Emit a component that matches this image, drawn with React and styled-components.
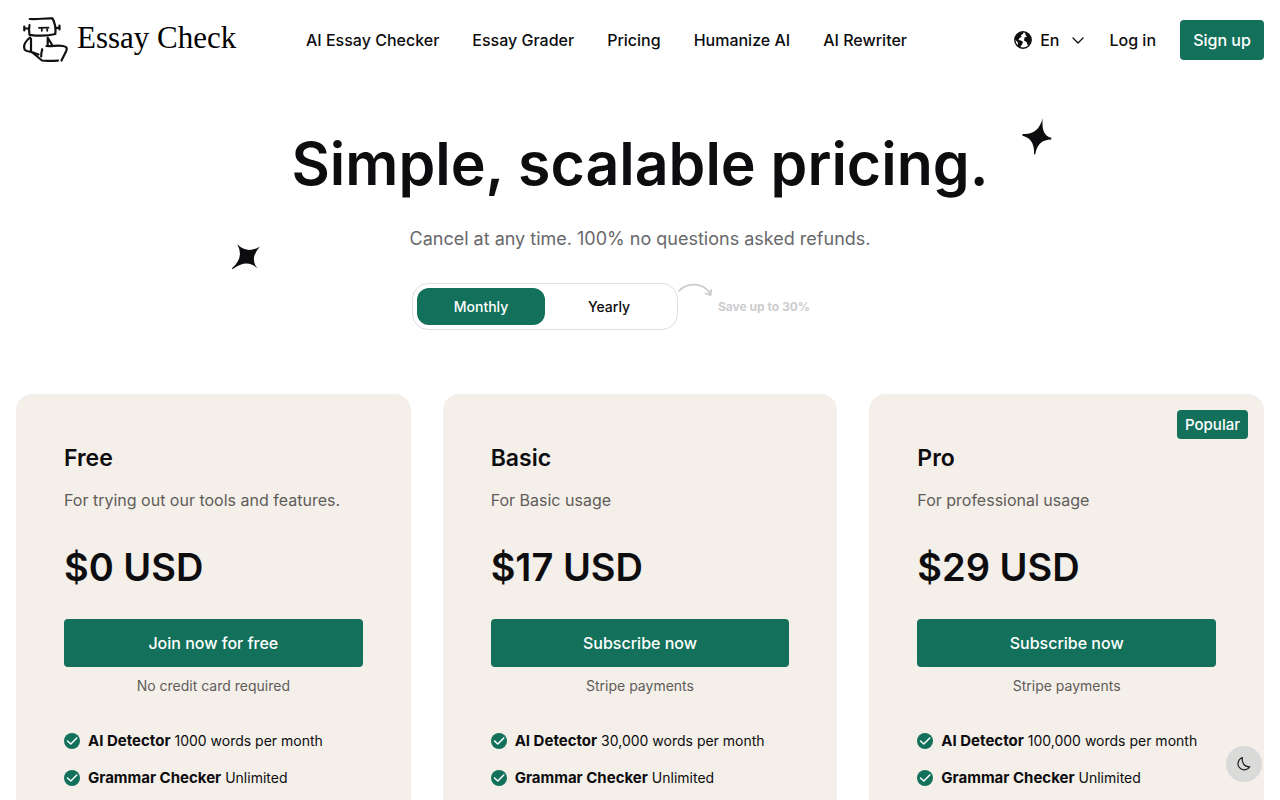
import React, { useState } from "react";
import styled, { createGlobalStyle } from "styled-components";

const green = "#13715b";
const ink = "#0d0d0f";

const GlobalStyle = createGlobalStyle`
  *, *::before, *::after { box-sizing: border-box; }
  body {
    margin: 0;
    background: #fff;
    color: ${ink};
    font-family: Inter, "Liberation Sans", sans-serif;
    font-size: 16px;
    line-height: 24px;
  }
  h1, h2, p, ul { margin: 0; padding: 0; }
  a { color: inherit; text-decoration: none; }
  button { font: inherit; border: 0; cursor: pointer; }
`;

const Page = styled.div`
  display: flex;
  flex-direction: column;
  min-height: 100vh;
`;

const Header = styled.header`
  display: flex;
  align-items: center;
  height: 80px;
  padding: 0 16px;
  font-weight: 500;
  white-space: nowrap;
`;

const Logo = styled.a`
  display: flex;
  align-items: center;
  gap: 7px;
  flex: 0 0 290px;
  padding-left: 6px;
  color: #000;
  font-family: "Liberation Serif", serif;
  font-size: 31px;
  font-weight: 400;
  line-height: 48px;
`;

const LogoText = styled.span`
  padding-bottom: 4px;
`;

const Nav = styled.nav`
  display: flex;
  gap: 33px;
`;

const Actions = styled.div`
  display: flex;
  align-items: center;
  gap: 24px;
  margin-left: auto;
`;

const Language = styled.button`
  display: flex;
  align-items: center;
  gap: 8px;
  padding: 0;
  background: none;
  color: inherit;
  font-weight: 500;
`;

const SignUp = styled.a`
  display: flex;
  align-items: center;
  justify-content: center;
  width: 84px;
  height: 40px;
  border-radius: 4px;
  background: ${green};
  color: #fff;
`;

const Hero = styled.section`
  position: relative;
  display: flex;
  flex-direction: column;
  align-items: center;
  width: 100%;
  max-width: 816px;
  margin: 0 auto;
  padding: 48px 0 64px;
`;

const Title = styled.h1`
  font-size: 59px;
  font-weight: 600;
  line-height: 72px;
  white-space: nowrap;
`;

const Subtitle = styled.p`
  padding: 25px 0 30px;
  color: #68686b;
  font-size: 18px;
  line-height: 28px;
`;

const Star = styled.svg`
  position: absolute;
  top: ${(p) => p.$top};
  left: ${(p) => p.$left};
  fill: ${ink};
`;

const Billing = styled.div`
  display: flex;
  align-items: center;
  width: 456px;
`;

const Toggle = styled.div`
  display: flex;
  flex: 0 0 266px;
  height: 47px;
  padding: 4px;
  border: 1px solid #dedee1;
  border-radius: 16px;
`;

const ToggleOption = styled.button`
  width: 128px;
  border-radius: 12px;
  background: ${(p) => (p.$active ? green : "transparent")};
  color: ${(p) => (p.$active ? "#fff" : ink)};
  font-size: 14px;
  font-weight: 500;
`;

const Arrow = styled.svg`
  align-self: flex-start;
  flex: none;
`;

const Saving = styled.span`
  padding-left: 5px;
  color: #ccccce;
  font-size: 12px;
  font-weight: 700;
  white-space: nowrap;
`;

const Plans = styled.main`
  display: grid;
  grid-template-columns: repeat(3, 1fr);
  gap: 32px;
  flex: 1;
  padding: 0 16px;
`;

const Card = styled.article`
  position: relative;
  padding: 48px 48px 8px;
  border-radius: 16px 16px 0 0;
  background: #f4efe9;
`;

const Badge = styled.span`
  position: absolute;
  top: 16px;
  right: 16px;
  padding: 0 8px;
  border-radius: 4px;
  background: ${green};
  color: #fff;
  font-size: 15px;
  font-weight: 500;
  line-height: 29px;
`;

const PlanName = styled.h2`
  font-size: 23px;
  font-weight: 600;
  line-height: 32px;
`;

const PlanSummary = styled.p`
  padding-top: 14px;
  color: #5f5c5a;
  font-size: 16px;
`;

const Price = styled.p`
  padding-top: 30px;
  font-size: 38px;
  font-weight: 600;
  line-height: 50px;
`;

const Subscribe = styled.button`
  display: block;
  width: 100%;
  height: 48px;
  margin-top: 27px;
  border-radius: 4px;
  background: ${green};
  color: #fff;
  font-weight: 500;
`;

const Note = styled.p`
  padding-top: 7px;
  color: #5f5c5a;
  font-size: 14px;
  text-align: center;
`;

const Features = styled.ul`
  display: grid;
  gap: 13px;
  padding-top: 31px;
  list-style: none;
`;

const Feature = styled.li`
  display: flex;
  align-items: center;
  gap: 8px;
  height: 24px;
  font-size: 14px;
  white-space: nowrap;
`;

const FeatureName = styled.strong`
  font-size: 15px;
  font-weight: 700;
`;

const FloatingButton = styled.button`
  position: fixed;
  right: 18px;
  bottom: 18px;
  display: grid;
  place-items: center;
  width: 36px;
  height: 36px;
  padding: 0;
  border-radius: 50%;
  background: #dadad9;
  color: #1c1c20;
`;

const RobotMark = () => (
  <svg width="48" height="48" viewBox="0 0 48 48" fill="none" stroke="#111" strokeWidth="2.2" strokeLinecap="round" strokeLinejoin="round" aria-hidden="true">
    <path d="M7.800 3C15 3.700 23 2 30.500 2.400C32.500 6 34 12 33.300 18C26 20 15 19.800 7.500 18.800C6.800 16 7 12 7.500 9" />
    <path d="M2.300 10.500V14.500M2.300 12.500H6M37.500 9.500V13.500M34 11.800H37.500" />
    <path d="M17 11.900L26.500 11.700M19.800 12V14.800M25.200 12V14.800" strokeWidth="1.800" />
    <path d="M8 21.500C5 24 2 28 2.100 31C2.200 34.500 3.500 34.800 9 35.900L16.500 38.500M9 22.500V35.500" />
    <path d="M25.700 21.700V29M25.900 22L30 28.800" />
    <path d="M24.500 30C31 30.300 36 29 41 30C45.500 31 45.300 32.500 44 35.500L39.500 44.500" />
    <path d="M20.200 33.200C19.500 36 19 38 19.200 40.500M11 37C14 39.500 17 42 20 44.500C25 45.500 31 44.700 36 44.600" />
  </svg>
);

const Globe = () => (
  <svg width="18" height="18" viewBox="0 0 18 18" aria-hidden="true">
    <circle cx="9" cy="9" r="8.200" fill="#fff" stroke={ink} strokeWidth="1.400" />
    <path d="M2 4.500L6.500 1L9.500 1.200L9 3L7 4L7.500 6L5.500 7L4.500 9L7 9.500L9 11L8 13.500L6 16.500L3.500 14.500L4 11.500L1 8.500Z" fill={ink} />
    <path d="M11 1.200L14.500 2.600L16.800 6L17 10L15.500 13.500L13.500 14L12.500 11L10 9.500L10.500 6.500L13 5.500L11.500 4Z" fill={ink} />
  </svg>
);

const Check = () => (
  <svg width="16" height="16" viewBox="0 0 16 16" fill="none" aria-hidden="true">
    <circle cx="8" cy="8" r="8" fill={green} />
    <path d="M3.500 8L6.800 11L12.800 5" stroke="#fff" strokeWidth="1.500" strokeLinecap="round" strokeLinejoin="round" />
  </svg>
);

const links = ["AI Essay Checker", "Essay Grader", "Pricing", "Humanize AI", "AI Rewriter"];

const plans = [
  { name: "Free", summary: "For trying out our tools and features.", price: "$0 USD", action: "Join now for free", note: "No credit card required", words: "1000" },
  { name: "Basic", summary: "For Basic usage", price: "$17 USD", action: "Subscribe now", note: "Stripe payments", words: "30,000" },
  { name: "Pro", summary: "For professional usage", price: "$29 USD", action: "Subscribe now", note: "Stripe payments", words: "100,000", popular: true },
];

export default function App() {
  const [period, setPeriod] = useState("Monthly");
  return (
    <Page>
      <GlobalStyle />
      <Header>
        <Logo href="#">
          <RobotMark />
          <LogoText>Essay Check</LogoText>
        </Logo>
        <Nav>
          {links.map((label) => (
            <a key={label} href="#">{label}</a>
          ))}
        </Nav>
        <Actions>
          <Language type="button">
            <Globe />
            En
            <svg width="18" height="18" viewBox="0 0 18 18" fill="none" stroke={ink} strokeWidth="1.300" strokeLinecap="round" strokeLinejoin="round" aria-hidden="true">
              <path d="M6 7L11 12L16 7" />
            </svg>
          </Language>
          <a href="#">Log in</a>
          <SignUp href="#">Sign up</SignUp>
        </Actions>
      </Header>

      <Hero>
        <Star $top="38px" $left="790px" width="30" height="37" viewBox="0 0 30 37" aria-hidden="true">
          <path d="M20.700 0.300Q18.800 17.500 29.300 19.800V21.500Q15.500 21.500 13.300 36.300H12Q13 21 0.500 17.800V16Q16 17.500 20.700 0.300Z" />
        </Star>
        <Star $top="164px" $left="0" width="29" height="26" viewBox="0 0 29 26" aria-hidden="true">
          <path d="M5.300 0.300Q15.500 10.500 28 2.500Q17 14.500 25.700 24.700Q15.400 14 0.500 25.200L0 24.300Q12.500 13.500 5.300 0.300Z" />
        </Star>
        <Title>Simple, scalable pricing.</Title>
        <Subtitle>Cancel at any time. 100% no questions asked refunds.</Subtitle>
        <Billing>
          <Toggle>
            {["Monthly", "Yearly"].map((name) => (
              <ToggleOption key={name} type="button" aria-pressed={period === name} $active={period === name} onClick={() => setPeriod(name)}>
                {name}
              </ToggleOption>
            ))}
          </Toggle>
          <Arrow width="35" height="14" viewBox="0 0 35 14" fill="none" stroke="#ccc" strokeWidth="1.800" strokeLinecap="round" aria-hidden="true">
            <path d="M1 8C9 -1 25 -1 32.500 11M27.500 10.500L32.500 12L33.300 7" />
          </Arrow>
          <Saving>Save up to 30%</Saving>
        </Billing>
      </Hero>

      <Plans>
        {plans.map((plan) => (
          <Card key={plan.name}>
            {plan.popular && <Badge>Popular</Badge>}
            <PlanName>{plan.name}</PlanName>
            <PlanSummary>{plan.summary}</PlanSummary>
            <Price>{plan.price}</Price>
            <Subscribe type="button">{plan.action}</Subscribe>
            <Note>{plan.note}</Note>
            <Features>
              <Feature>
                <Check />
                <span><FeatureName>AI Detector</FeatureName> {plan.words} words per month</span>
              </Feature>
              <Feature>
                <Check />
                <span><FeatureName>Grammar Checker</FeatureName> Unlimited</span>
              </Feature>
            </Features>
          </Card>
        ))}
      </Plans>

      <FloatingButton type="button" aria-label="Switch to dark mode">
        <svg width="16" height="16" viewBox="0 0 16 16" fill="none" stroke="currentColor" strokeWidth="1.200" strokeLinejoin="round" aria-hidden="true">
          <path d="M6.300 1.500C5.500 6.500 8 11 13.800 10.800C12 14 7.500 14.800 4.500 12.500C0.500 9.500 1.500 3.500 6.300 1.500Z" />
        </svg>
      </FloatingButton>
    </Page>
  );
}
